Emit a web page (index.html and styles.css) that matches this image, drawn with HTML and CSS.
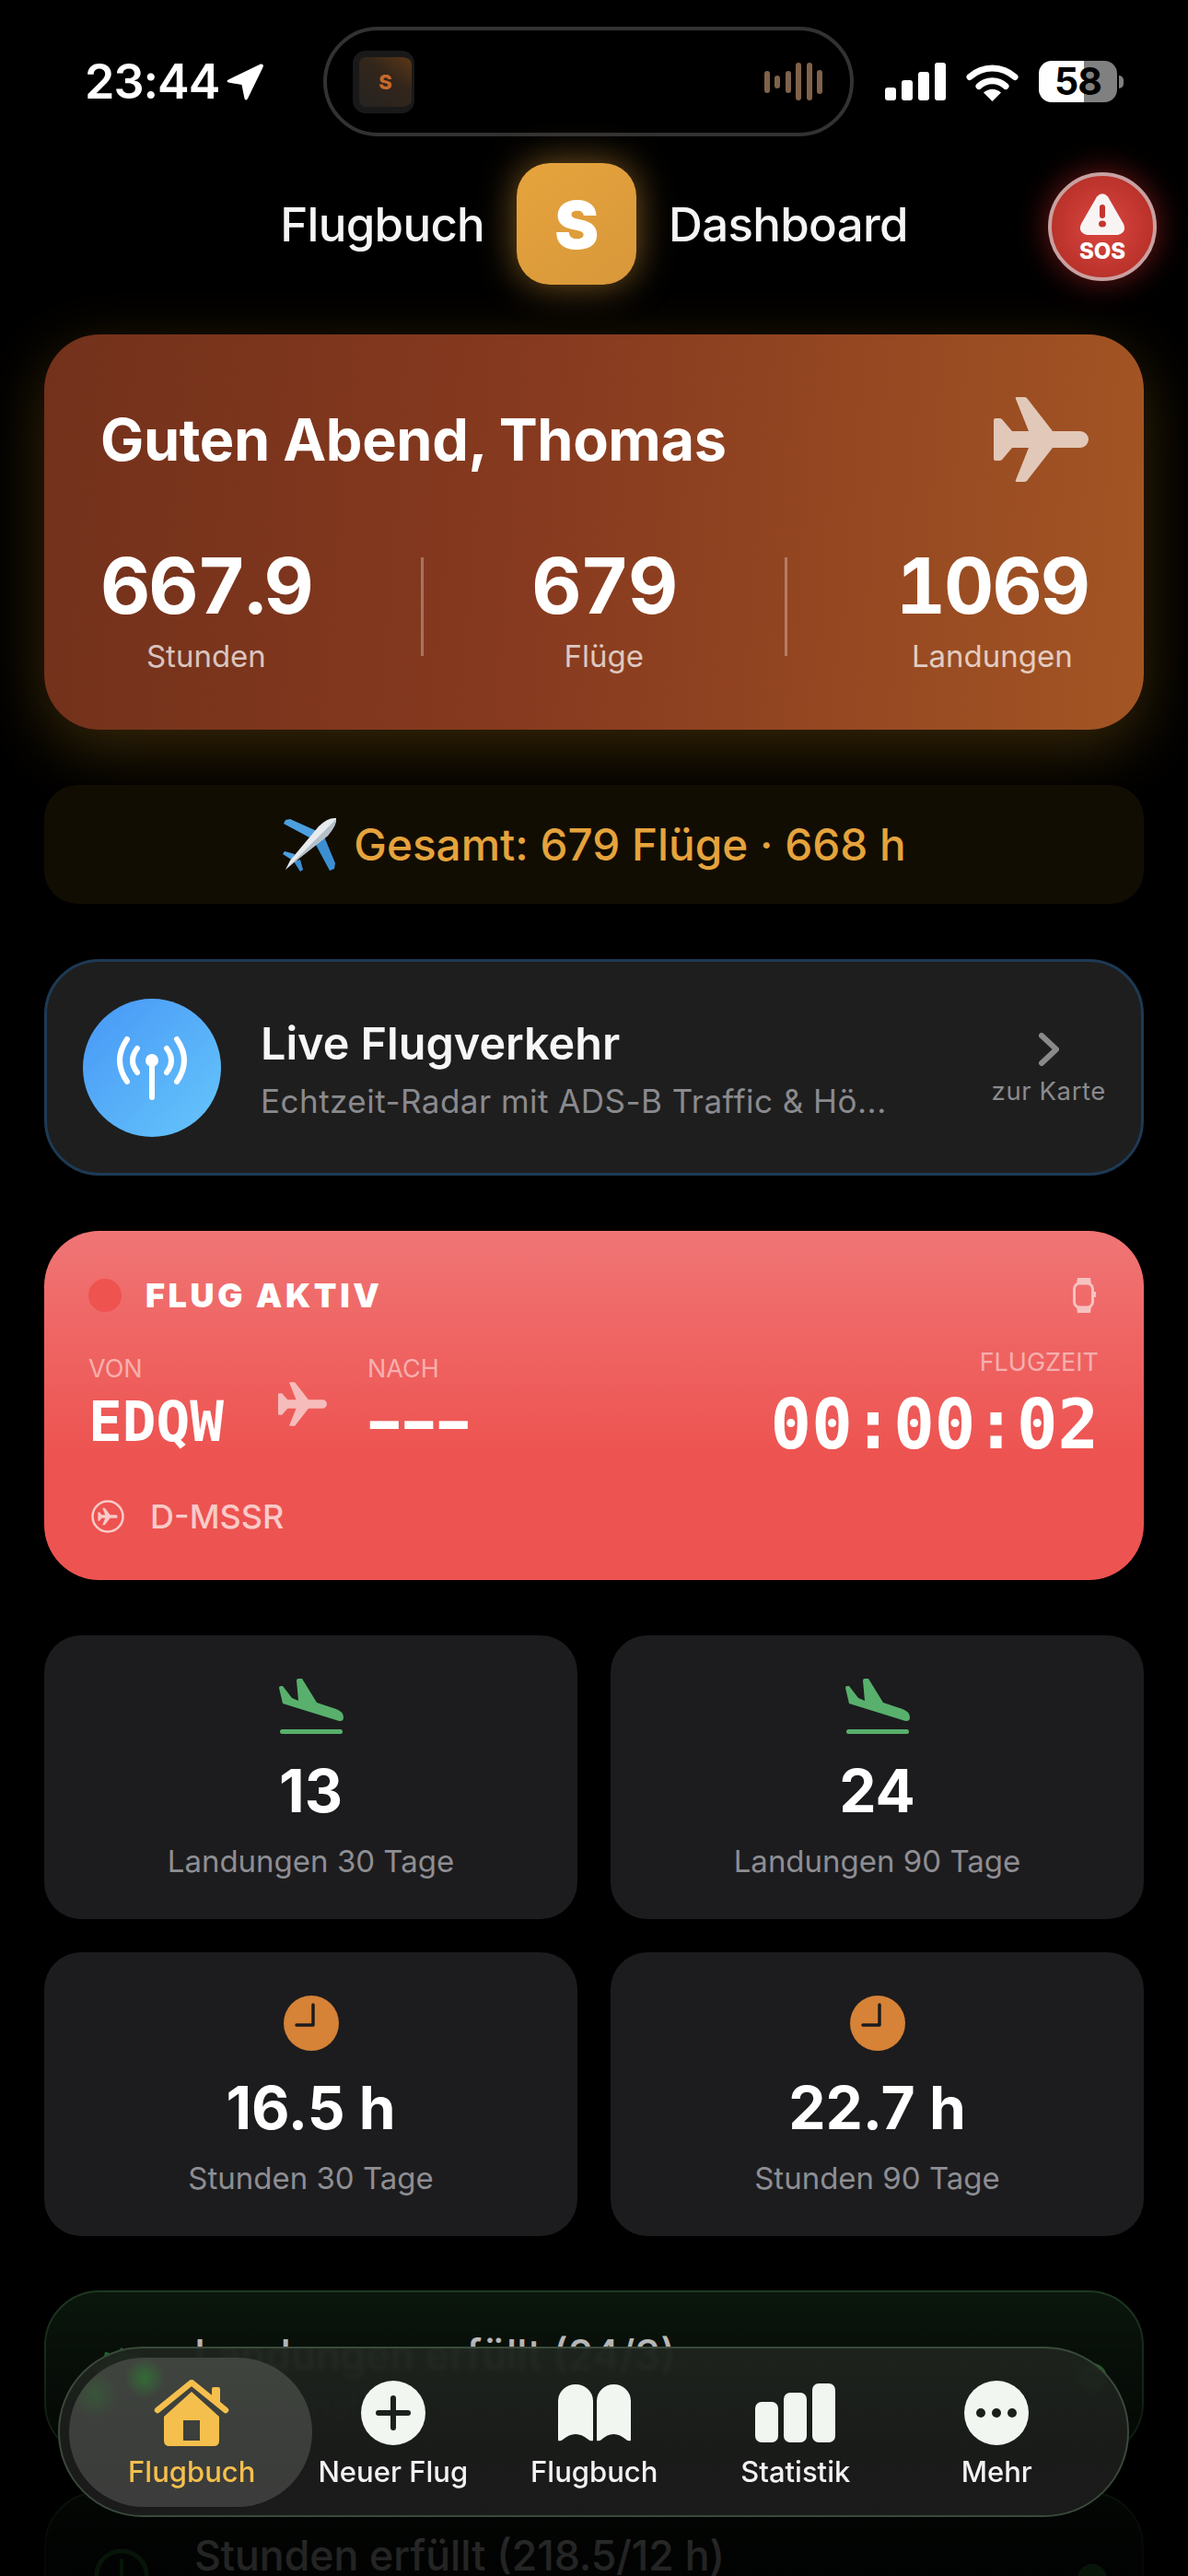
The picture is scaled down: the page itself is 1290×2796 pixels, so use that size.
FILE: index.html
```html
<!DOCTYPE html>
<html lang="de">
<head>
    <meta charset="UTF-8">
    <meta name="viewport" content="width=device-width, initial-scale=1.0">
    <title>Flugbuch Dashboard</title>
    <link rel="stylesheet" href="styles.css">
</head>
<body>
    <!-- Shared plane shape -->
    <svg class="defs" width="0" height="0">
        <symbol id="plane" viewBox="0 0 103 92">
            <path d="M94 37H64L36 1Q35 0 33 0H25Q23 0 24 2L38 37H20L9 24Q8 23 6 23H2Q0 23 0 25V67Q0 69 2 69H6Q8 69 9 68L20 55H38L24 90Q23 92 25 92H33Q35 92 36 91L64 55H94A9 9 0 0 0 94 37Z"/>
        </symbol>
    </svg>

    <!-- Status bar -->
    <div class="status-bar">
        <div class="status-left">
            <span class="status-time">23:44</span>
            <svg class="status-arrow" viewBox="0 0 40 40"><path d="M37 .5Q41 0 39.500 4L23 38Q21 41 19.500 38L16.500 23 2 20.500Q-1 19 2 17.500Z"/></svg>
        </div>
        <div class="island">
            <div class="island-thumb"><span>S</span></div>
            <div class="island-wave">
                <i class="w1"></i><i class="w2"></i><i class="w1"></i><i class="w3"></i><i class="w3"></i><i class="w4"></i>
            </div>
        </div>
        <div class="status-right">
            <div class="signal"><i class="s1"></i><i class="s2"></i><i class="s3"></i><i class="s4"></i></div>
            <svg class="wifi" viewBox="0 0 57 42">
                <path d="M4 15.500A36 36 0 0 1 53 15.500" fill="none" stroke="#fff" stroke-width="7" stroke-linecap="round"/>
                <path d="M14 25.500A21 21 0 0 1 43 25.500" fill="none" stroke="#fff" stroke-width="7" stroke-linecap="round"/>
                <path d="M28.500 42L19 32.500Q28.500 25 38 32.500Z" fill="#fff"/>
            </svg>
            <div class="battery-wrap">
                <div class="battery">58</div>
                <i class="battery-cap"></i>
            </div>
        </div>
    </div>

    <!-- Header -->
    <header class="top-header">
        <span class="top-title">Flugbuch</span>
        <div class="logo">S</div>
        <span class="top-title">Dashboard</span>
        <div class="sos">
            <svg viewBox="0 0 50 46"><path d="M19 3.500Q25 -3 31 3.500L48 33Q52 42 42 45H8Q-2 42 2 33Z" fill="#f8f4f4"/><rect x="22" y="12" width="6" height="15" rx="3" fill="#c4352e"/><ellipse cx="25" cy="33" rx="4" ry="3.500" fill="#c4352e"/></svg>
            <span>SOS</span>
        </div>
    </header>

    <main class="content">
        <!-- Greeting -->
        <section class="hero-card">
            <div class="hero-top">
                <h1>Guten Abend, Thomas</h1>
                <svg class="hero-plane"><use href="#plane"/></svg>
            </div>
            <div class="hero-stats">
                <div class="hero-stat"><b>667.9</b><span>Stunden</span></div>
                <i class="hero-divider"></i>
                <div class="hero-stat"><b>679</b><span>Flüge</span></div>
                <i class="hero-divider"></i>
                <div class="hero-stat"><b>1069</b><span>Landungen</span></div>
            </div>
        </section>

        <!-- Totals -->
        <section class="total-banner">
            <svg class="emoji-plane" viewBox="0 0 60 60">
                <path d="M30 22L2 7 4 3 9 2 38 15Z" fill="#4c9fdf"/>
                <path d="M37 30L52 58 57 56 58 50 46 21Z" fill="#3c8fd2"/>
                <path d="M14 40L3 37 1 40 12 47Z" fill="#4c9fdf"/>
                <path d="M20 46L23 57 20 59 13 48Z" fill="#3c8fd2"/>
                <path d="M59 1Q60 8 50 20L12 50 4 57 9 47 40 10Q50 0 59 1Z" fill="#e6ebef"/>
                <path d="M59 2Q60 8 50 20L12 50 4 57Z" fill="#b5bfc8"/>
            </svg>
            <span>Gesamt: 679 Flüge · 668 h</span>
        </section>

        <!-- Live traffic -->
        <section class="live-card">
            <div class="live-icon">
                <svg viewBox="0 0 80 70" fill="none" stroke="#fff" stroke-width="6" stroke-linecap="round">
                    <path d="M40 27V67"/>
                    <path d="M24 14Q14 27 24 40M56 14Q66 27 56 40"/>
                    <path d="M13 4Q-3 27 13 50M67 4Q83 27 67 50"/>
                    <circle cx="40" cy="27" r="7" fill="#fff" stroke="none"/>
                </svg>
            </div>
            <div class="live-text">
                <div class="live-title">Live Flugverkehr</div>
                <div class="live-sub">Echtzeit-Radar mit ADS-B Traffic &amp; Hö...</div>
            </div>
            <div class="live-link">
                <svg viewBox="0 0 22 36" fill="none" stroke="#8a8a8a" stroke-width="6" stroke-linecap="round" stroke-linejoin="round"><path d="M3 3L19 18 3 33"/></svg>
                <span>zur Karte</span>
            </div>
        </section>

        <!-- Active flight -->
        <section class="flight-card">
            <div class="flight-head">
                <i class="flight-dot"></i>
                <span class="flight-state">FLUG AKTIV</span>
                <svg class="flight-watch" viewBox="0 0 26 38">
                    <path d="M6 0H20L21 7H5ZM5 31H21L20 38H6Z" fill="#f6c3c1"/>
                    <rect x="2.500" y="6" width="20" height="26" rx="6" fill="none" stroke="#f6c3c1" stroke-width="3"/>
                    <rect x="24" y="15" width="2" height="6" fill="#f6c3c1"/>
                </svg>
            </div>
            <div class="flight-route">
                <div class="flight-col">
                    <span class="flight-label">VON</span>
                    <span class="flight-code">EDQW</span>
                </div>
                <svg class="flight-plane"><use href="#plane"/></svg>
                <div class="flight-col">
                    <span class="flight-label">NACH</span>
                    <span class="flight-code flight-code-empty">---</span>
                </div>
                <div class="flight-col flight-timer">
                    <span class="flight-label">FLUGZEIT</span>
                    <span class="flight-time">00:00:02</span>
                </div>
            </div>
            <div class="flight-reg">
                <svg viewBox="0 0 36 36">
                    <circle cx="18" cy="18" r="16.500" fill="none" stroke="#f8cac8" stroke-width="2.500"/>
                    <use href="#plane" x="7" y="8.500" width="22" height="19" fill="#f8cac8"/>
                </svg>
                <span>D-MSSR</span>
            </div>
        </section>

        <!-- Stat tiles -->
        <section class="stat-grid">
            <div class="stat-tile">
                <svg class="stat-icon" viewBox="0 0 70 60"><path d="M4 27L0 10Q0 8 2 8H4L14 21 21 24 19 2Q19 0 21 0H25L41 26 62 33Q70 36 70 42 70 48 62 45Z" fill="#58b06c"/><rect x="1" y="55" width="68" height="5" rx="2.500" fill="#58b06c"/></svg>
                <div class="stat-value">13</div>
                <div class="stat-label">Landungen 30 Tage</div>
            </div>
            <div class="stat-tile">
                <svg class="stat-icon" viewBox="0 0 70 60"><path d="M4 27L0 10Q0 8 2 8H4L14 21 21 24 19 2Q19 0 21 0H25L41 26 62 33Q70 36 70 42 70 48 62 45Z" fill="#58b06c"/><rect x="1" y="55" width="68" height="5" rx="2.500" fill="#58b06c"/></svg>
                <div class="stat-value">24</div>
                <div class="stat-label">Landungen 90 Tage</div>
            </div>
            <div class="stat-tile">
                <svg class="stat-icon" viewBox="0 0 60 60"><circle cx="30" cy="30" r="30" fill="#d68237"/><path d="M32 10V32H14" fill="none" stroke="#1c1c1e" stroke-width="3.500" stroke-linecap="round" stroke-linejoin="round"/></svg>
                <div class="stat-value">16.5 h</div>
                <div class="stat-label">Stunden 30 Tage</div>
            </div>
            <div class="stat-tile">
                <svg class="stat-icon" viewBox="0 0 60 60"><circle cx="30" cy="30" r="30" fill="#d68237"/><path d="M32 10V32H14" fill="none" stroke="#1c1c1e" stroke-width="3.500" stroke-linecap="round" stroke-linejoin="round"/></svg>
                <div class="stat-value">22.7 h</div>
                <div class="stat-label">Stunden 90 Tage</div>
            </div>
        </section>

        <!-- Currency checks, mostly under the tab bar -->
        <section class="check-list">
            <div class="check-card">
                <svg class="check-icon" viewBox="0 0 64 64"><path d="M32 0L40 8 51 5 54 16 64 21 60 32 64 43 54 48 51 59 40 56 32 64 24 56 13 59 10 48 0 43 4 32 0 21 10 16 13 5 24 8Z" fill="#2f8f3c"/></svg>
                <div class="check-text">
                    <div class="check-title">Landungen erfüllt (24/3)</div>
                    <div class="check-sub">in 3 Monaten</div>
                </div>
                <i class="check-dot"></i>
            </div>
            <div class="check-card">
                <svg class="check-icon" viewBox="0 0 64 64"><circle cx="32" cy="32" r="29" fill="none" stroke="#2f8f3c" stroke-width="5"/><path d="M32 12V34H18" fill="none" stroke="#2f8f3c" stroke-width="4"/></svg>
                <div class="check-text">
                    <div class="check-title">Stunden erfüllt (218.5/12 h)</div>
                </div>
                <i class="check-dot"></i>
            </div>
        </section>
    </main>

    <div class="bottom-fade"></div>

    <!-- Tab bar -->
    <nav class="tab-bar">
        <div class="tab-pill"></div>
        <a class="tab tab-active" href="#">
            <svg class="tab-icon tab-icon-home" viewBox="0 0 82 72">
                <path d="M11 40L41 13 71 40V66Q71 72 65 72H17Q11 72 11 66ZM32 44V66H50V44Z" fill="#f5bf4d" fill-rule="evenodd"/>
                <path d="M4 33L41 3 78 33" fill="none" stroke="#f5bf4d" stroke-width="6.500" stroke-linecap="round" stroke-linejoin="round"/>
                <path d="M63 10Q63 8 65 8H70Q72 8 72 10V26L63 19Z" fill="#f5bf4d"/>
            </svg>
            <span>Flugbuch</span>
        </a>
        <a class="tab" href="#">
            <svg class="tab-icon tab-icon-round" viewBox="0 0 70 70"><circle cx="35" cy="35" r="35" fill="#f1f6f1"/><path d="M35 19V51M19 35H51" stroke="#1c201c" stroke-width="6" stroke-linecap="round"/></svg>
            <span>Neuer Flug</span>
        </a>
        <a class="tab" href="#">
            <svg class="tab-icon tab-icon-book" viewBox="0 0 79 62" fill="#f1f6f1">
                <path d="M0 18A19 18 0 0 1 38 18V61Q35 62 33 60 19 48 5 60 3 62 0 61Z"/>
                <path d="M42 18A18.500 18 0 0 1 79 18V61Q76 62 74 60 60 48 47 60 45 62 42 61Z"/>
            </svg>
            <span>Flugbuch</span>
        </a>
        <a class="tab" href="#">
            <svg class="tab-icon tab-icon-bars" viewBox="0 0 87 64" fill="#f1f6f1">
                <rect x="0" y="20" width="25" height="44" rx="7"/>
                <rect x="31" y="10" width="25" height="54" rx="7"/>
                <rect x="62" y="0" width="25" height="64" rx="7"/>
            </svg>
            <span>Statistik</span>
        </a>
        <a class="tab" href="#">
            <svg class="tab-icon tab-icon-round" viewBox="0 0 70 70" fill="#1c201c"><circle cx="35" cy="35" r="35" fill="#f1f6f1"/><circle cx="18" cy="35" r="5"/><circle cx="35" cy="35" r="5"/><circle cx="52" cy="35" r="5"/></svg>
            <span>Mehr</span>
        </a>
    </nav>
</body>
</html>
```

FILE: styles.css
```css
* {
    box-sizing: border-box;
    margin: 0;
    padding: 0;
}
html, body {
    width: 1290px;
    height: 2796px;
    overflow: hidden;
}
body {
    position: relative;
    font-family: 'Inter', 'Liberation Sans', sans-serif;
    background: #000;
    color: #fff;
}
.defs {
    position: absolute;
}

/* Status bar */
.status-bar {
    display: flex;
    align-items: center;
    height: 148px;
    padding: 29px 0 0 92px;
}
.status-left {
    display: flex;
    align-items: center;
    gap: 8px;
    width: 259px;
}
.status-time {
    font-size: 52px;
    font-weight: 600;
    line-height: 60px;
    letter-spacing: -1px;
}
.status-arrow {
    width: 40px;
    height: 40px;
    fill: #fff;
}
.island {
    display: flex;
    align-items: center;
    justify-content: space-between;
    width: 576px;
    height: 119px;
    padding: 0 30px 0 28px;
    border: 4px solid #323232;
    border-radius: 60px;
}
.island-thumb {
    display: flex;
    align-items: center;
    justify-content: center;
    width: 67px;
    height: 68px;
    border-radius: 14px;
    border: solid #191919;
    border-width: 7px 3px 7px 7px;
    background: linear-gradient(215deg, #5c3715 0%, #33261b 40%, #252321 100%);
    color: #c8692a;
    font-size: 22px;
    font-weight: 800;
}
.island-wave {
    display: flex;
    align-items: center;
    gap: 5.5px;
}
.island-wave i {
    width: 6px;
    border-radius: 3px;
    background: #80624a;
}
.island-wave .w1 { height: 24px; }
.island-wave .w2 { height: 14px; }
.island-wave .w3 { height: 41px; }
.island-wave .w4 { height: 26px; }
.status-right {
    display: flex;
    align-items: center;
    gap: 22px;
    margin-left: 34px;
}
.signal {
    display: flex;
    align-items: flex-end;
    gap: 6px;
    height: 41px;
}
.signal i {
    width: 12px;
    border-radius: 3px;
    background: #fff;
}
.signal .s1 { height: 14px; }
.signal .s2 { height: 22px; }
.signal .s3 { height: 31px; }
.signal .s4 { height: 41px; }
.wifi {
    width: 57px;
    height: 42px;
}
.battery-wrap {
    display: flex;
    align-items: center;
    gap: 2px;
}
.battery {
    width: 85px;
    height: 45px;
    border-radius: 14px;
    background: linear-gradient(90deg, #fff 58%, #808080 58%);
    color: #000;
    font-size: 41px;
    font-weight: 700;
    line-height: 45px;
    letter-spacing: -1px;
    text-align: center;
}
.battery-cap {
    width: 5px;
    height: 14px;
    border-radius: 0 5px 5px 0;
    background: #808080;
}

/* Header */
.top-header {
    position: relative;
    display: flex;
    align-items: center;
    justify-content: center;
    gap: 35px;
    height: 132px;
    margin-top: 29px;
}
.top-title {
    font-size: 51px;
    font-weight: 500;
    letter-spacing: -0.7px;
    color: #f5f5f5;
}
.logo {
    display: flex;
    align-items: center;
    justify-content: center;
    width: 130px;
    height: 132px;
    border-radius: 36px;
    background: linear-gradient(145deg, #e6a43d, #d8973a);
    box-shadow: 0 0 40px rgba(229, 163, 60, 0.55);
    font-size: 72px;
    font-weight: 900;
}
.sos {
    position: absolute;
    top: 10px;
    left: 1138px;
    display: flex;
    flex-direction: column;
    align-items: center;
    width: 118px;
    height: 118px;
    padding-top: 19px;
    border: 4px solid #c9a0a0;
    border-radius: 50%;
    background: radial-gradient(circle at 50% 50%, #dc4640 0%, #ab2a22 100%);
    box-shadow: 0 0 34px rgba(225, 45, 45, 0.5);
}
.sos svg {
    width: 50px;
    height: 46px;
}
.sos span {
    font-size: 24px;
    font-weight: 800;
    line-height: 28px;
    margin-top: 3px;
}

/* Main column */
.content {
    display: flex;
    flex-direction: column;
    gap: 60px;
    padding: 54px 48px 0;
}

/* Greeting card */
.hero-card {
    height: 429px;
    padding: 68px 60px 0 61px;
    border-radius: 60px;
    background: linear-gradient(95deg, #73311b 0%, #873a1f 45%, #a35524 100%);
    box-shadow: 0 20px 70px rgba(205, 145, 30, 0.28);
}
.hero-top {
    display: flex;
    align-items: center;
    justify-content: space-between;
    height: 92px;
}
.hero-top h1 {
    font-size: 63px;
    font-weight: 700;
    letter-spacing: -0.4px;
}
.hero-plane {
    width: 103px;
    height: 92px;
    fill: #e2c8b8;
}
.hero-stats {
    display: flex;
    align-items: flex-start;
    justify-content: space-between;
    margin-top: 71px;
}
.hero-stat {
    display: flex;
    flex-direction: column;
    align-items: center;
}
.hero-stat b {
    font-size: 84px;
    font-weight: 700;
    line-height: 84px;
    font-feature-settings: "tnum";
    letter-spacing: -2px;
}
.hero-stat span {
    margin-top: 14px;
    font-size: 33px;
    line-height: 40px;
    color: rgba(255, 255, 255, 0.72);
}
.hero-divider {
    width: 3px;
    height: 107px;
    margin-top: 11px;
    background: rgba(255, 255, 255, 0.3);
}

/* Totals banner */
.total-banner {
    display: flex;
    align-items: center;
    justify-content: center;
    gap: 18px;
    height: 129px;
    border-radius: 36px;
    background: #120d03;
    color: #e5a33c;
    font-size: 47.700px;
    font-weight: 500;
}
.emoji-plane {
    width: 60px;
    height: 60px;
}

/* Live traffic */
.live-card {
    display: flex;
    align-items: center;
    height: 235px;
    padding: 0 38px 0 39px;
    border: 3px solid #1d3a55;
    border-radius: 60px;
    background: #1e1e1e;
}
.live-icon {
    display: flex;
    align-items: center;
    justify-content: center;
    flex-shrink: 0;
    width: 150px;
    height: 150px;
    border-radius: 50%;
    background: linear-gradient(135deg, #4797f6, #66c6fb);
}
.live-icon svg {
    width: 80px;
    height: 70px;
}
.live-text {
    margin: 4px 0 0 43px;
}
.live-title {
    font-size: 48.500px;
    font-weight: 600;
    line-height: 56px;
    color: #f7f7f7;
}
.live-sub {
    margin-top: 12px;
    font-size: 35px;
    line-height: 44px;
    letter-spacing: 0.47px;
    color: #8a8a8e;
}
.live-link {
    display: flex;
    flex-direction: column;
    align-items: center;
    margin: 5px 0 0 auto;
    gap: 10px;
    color: #8a8a8e;
    font-size: 27.500px;
    line-height: 34px;
    letter-spacing: 0.6px;
}
.live-link svg {
    width: 22px;
    height: 36px;
}

/* Active flight */
.flight-card {
    height: 379px;
    padding: 51px 52px 51px 48px;
    border-radius: 60px;
    background: linear-gradient(180deg, #f07575 0%, #ed5350 65%);
}
.flight-head {
    display: flex;
    align-items: center;
    height: 38px;
}
.flight-dot {
    width: 36px;
    height: 36px;
    margin-right: 26px;
    border-radius: 50%;
    background: #ee5350;
}
.flight-state {
    font-size: 36px;
    font-weight: 900;
    letter-spacing: 3.600px;
}
.flight-watch {
    width: 26px;
    height: 38px;
    margin-left: auto;
}
.flight-route {
    display: flex;
    align-items: center;
    height: 123px;
    margin: 37px -3px 0 0;
}
.flight-col {
    display: flex;
    flex-direction: column;
}
.flight-label {
    font-size: 27px;
    line-height: 34px;
    color: rgba(255, 255, 255, 0.5);
}
.flight-code {
    margin-top: 5px;
    font-family: 'DejaVu Sans Mono', 'Liberation Mono', monospace;
    font-size: 61px;
    font-weight: 700;
    line-height: 70px;
}
.flight-code-empty {
    letter-spacing: -14px;
    transform: translateX(-12px) scaleX(1.65);
    transform-origin: left center;
}
.flight-plane {
    width: 53px;
    height: 48px;
    margin: 0 44px 0 59px;
    fill: #f5bcbb;
}
.flight-timer {
    align-items: flex-end;
    margin-left: auto;
}
.flight-time {
    margin-top: 10px;
    font-family: 'DejaVu Sans Mono', 'Liberation Mono', monospace;
    font-size: 74px;
    font-weight: 700;
    line-height: 80px;
}
.flight-reg {
    display: flex;
    align-items: center;
    gap: 28px;
    height: 36px;
    margin-top: 43px;
    padding-left: 3px;
    font-size: 36px;
    font-weight: 500;
    color: #f8cac8;
}
.flight-reg svg {
    width: 36px;
    height: 36px;
}

/* Stat tiles */
.stat-grid {
    display: grid;
    grid-template-columns: 1fr 1fr;
    gap: 36px;
}
.stat-tile {
    display: flex;
    flex-direction: column;
    align-items: center;
    height: 308px;
    padding-top: 47px;
    border-radius: 40px;
    background: #1c1c1e;
}
.stat-icon {
    height: 60px;
}
.stat-value {
    margin-top: 27px;
    font-size: 64px;
    font-weight: 700;
    line-height: 70px;
}
.stat-label {
    margin-top: 21px;
    font-size: 33px;
    line-height: 40px;
    color: #8e8e93;
}

/* Currency checks */
.check-list {
    display: flex;
    flex-direction: column;
    gap: 36px;
    margin-top: -1px;
}
.check-card {
    display: flex;
    align-items: flex-start;
    height: 182px;
    padding: 48px 38px 0 52px;
    border: 2px solid #1f3a22;
    border-radius: 60px;
    background: linear-gradient(180deg, #0b170d, #0a120b);
}
.check-icon {
    width: 60px;
    height: 60px;
    margin-top: 12px;
    flex-shrink: 0;
}
.check-text {
    margin-left: 49px;
}
.check-title {
    font-size: 44.600px;
    font-weight: 500;
    line-height: 40px;
    color: #f2f2f2;
}
.check-sub {
    margin-top: 15px;
    font-size: 36px;
    line-height: 40px;
    color: #8e8e93;
}
.check-dot {
    width: 32px;
    height: 32px;
    margin: 29px 0 0 auto;
    border-radius: 50%;
    background: #2f8f3c;
}
.bottom-fade {
    position: absolute;
    left: 0;
    right: 0;
    top: 2480px;
    bottom: 0;
    background: linear-gradient(180deg, rgba(0, 0, 0, 0) 0%, rgba(0, 0, 0, 0.25) 20%, rgba(0, 0, 0, 0.85) 90%);
}

/* Tab bar */
.tab-bar {
    position: absolute;
    left: 63px;
    top: 2547px;
    display: grid;
    grid-template-columns: repeat(5, 218.5px);
    width: 1163px;
    height: 185px;
    padding: 34px 0 0 34px;
    overflow: hidden;
    border: 2px solid #3b4a3b;
    border-radius: 92px;
    background: linear-gradient(180deg, rgba(30, 36, 30, 0.96) 0%, rgba(26, 28, 26, 0.97) 60%, rgba(27, 27, 27, 0.98) 100%);
    backdrop-filter: blur(2px);
}
.tab-pill {
    position: absolute;
    left: 10px;
    top: 10px;
    width: 264px;
    height: 162px;
    border-radius: 81px;
    background:
        radial-gradient(circle at 82px 22px, #336b36 0, rgba(51, 107, 54, 0) 22px),
        radial-gradient(circle at 28px 40px, rgba(51, 107, 54, 0.45) 0, rgba(51, 107, 54, 0) 26px),
        linear-gradient(180deg, #40443f 0%, #3b3e3a 60%, #3c3c3c 100%);
}
.tab {
    position: relative;
    display: flex;
    flex-direction: column;
    align-items: center;
    color: #f2f2f2;
    font-size: 31px;
    font-weight: 500;
    line-height: 40px;
    text-decoration: none;
}
.tab-icon {
    height: 72px;
    margin-bottom: 8px;
}
.tab-icon-home { width: 82px; }
.tab-icon-round { width: 70px; }
.tab-icon-book { width: 79px; }
.tab-icon-bars { width: 87px; }
.tab-active {
    color: #f5bf4d;
}
```
